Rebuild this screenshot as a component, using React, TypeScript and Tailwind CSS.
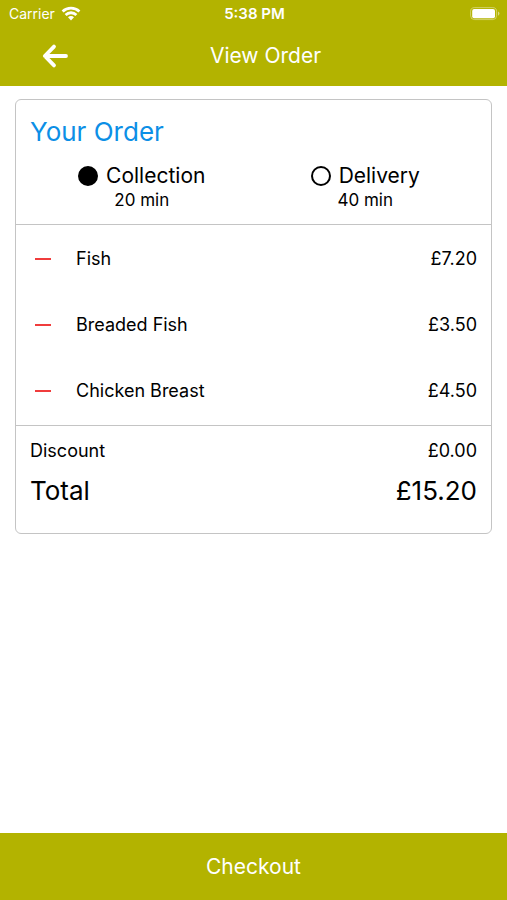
import React from 'react';

const items = [
  { name: 'Fish', price: '£7.20' },
  { name: 'Breaded Fish', price: '£3.50' },
  { name: 'Chicken Breast', price: '£4.50' },
];

const options = [
  { id: 'collection', label: 'Collection', time: '20 min' },
  { id: 'delivery', label: 'Delivery', time: '40 min' },
];

const StatusBar: React.FC = () => (
  <div className="grid grid-cols-3 items-center h-7 pl-[9px] pr-[7px] text-sm">
    <div className="flex items-center gap-1.5">
      <span>Carrier</span>
      <svg className="w-5 h-4" viewBox="0 0 20 16" fill="none" stroke="currentColor" strokeWidth="2.8">
        <path d="M1.6 5.4a12.2 12.2 0 0 1 16.8 0" />
        <path d="M4.6 8.9a7.8 7.8 0 0 1 10.8 0" />
        <path d="M10 14.4l-3-3.1a4.2 4.2 0 0 1 6 0z" fill="currentColor" stroke="none" />
      </svg>
    </div>
    <p className="text-center text-[15px] font-semibold">5:38 PM</p>
    <div className="flex justify-end">
      <svg className="w-[30px] h-[14px]" viewBox="0 0 30 14">
        <rect x="0.6" y="0.6" width="26" height="12" rx="4" fill="none" stroke="currentColor" strokeOpacity="0.4" />
        <rect x="2.2" y="2" width="22.8" height="9.2" rx="2" fill="currentColor" />
        <path d="M28 4.4v4.4a2.4 2.4 0 0 0 0-4.4z" fill="currentColor" fillOpacity="0.5" />
      </svg>
    </div>
  </div>
);

export default function App() {
  return (
    <div className="min-h-screen flex flex-col bg-white text-black font-['Inter',sans-serif]">
      <header className="pb-0.5 bg-[#b3b300] text-white">
        <StatusBar />
        <div className="grid grid-cols-[1fr_auto_1fr] items-center h-14 pl-10 pr-4">
          <button type="button" aria-label="Back" className="w-8 h-8 cursor-pointer">
            <svg
              className="w-8 h-8"
              viewBox="0 0 32 32"
              fill="none"
              stroke="currentColor"
              strokeWidth="3.8"
              strokeLinecap="round"
              strokeLinejoin="round"
            >
              <path d="M26 16H5M14 6.6L4.8 16L14 25.4" />
            </svg>
          </button>
          <h1 className="text-[21px]">View Order</h1>
        </div>
      </header>

      <main className="flex-1 px-[15px] pt-[13px]">
        <section className="rounded-md border border-[#c4c4c4]">
          <div className="px-3.5 pt-4 pb-3.5 border-b border-[#c4c4c4]">
            <h2 className="text-[26px] leading-8 text-[#0c8fe6]">Your Order</h2>
            <div className="grid grid-cols-2 mt-3.5">
              {options.map((option) => (
                <div key={option.id} className="flex flex-col items-center">
                  <label className="flex items-center gap-2 text-[21px] leading-7 cursor-pointer">
                    <input
                      type="radio"
                      name="method"
                      defaultChecked={option.id === 'collection'}
                      className="appearance-none w-5 h-5 rounded-full border-2 border-black checked:bg-black"
                    />
                    {option.label}
                  </label>
                  <p className="text-[17px] leading-5">{option.time}</p>
                </div>
              ))}
            </div>
          </div>

          <ul className="py-px border-b border-[#c4c4c4]">
            {items.map((item) => (
              <li key={item.name} className="flex items-center h-[66px] px-3.5 text-lg">
                <button
                  type="button"
                  aria-label={`Remove ${item.name}`}
                  className="w-[26px] h-8 flex items-center justify-center cursor-pointer"
                >
                  <span className="w-4 h-0.5 bg-[#f03c3c]" />
                </button>
                <span className="flex-1 ml-5">{item.name}</span>
                <span>{item.price}</span>
              </li>
            ))}
          </ul>

          <div className="px-3.5 pt-[11px] pb-6">
            <p className="flex justify-between text-lg">
              <span>Discount</span>
              <span>£0.00</span>
            </p>
            <p className="flex justify-between mt-2 text-[26px] leading-9">
              <span>Total</span>
              <span>£15.20</span>
            </p>
          </div>
        </section>
      </main>

      <button type="button" className="h-[67px] bg-[#b3b300] text-white text-[21px] cursor-pointer">
        Checkout
      </button>
    </div>
  );
}
